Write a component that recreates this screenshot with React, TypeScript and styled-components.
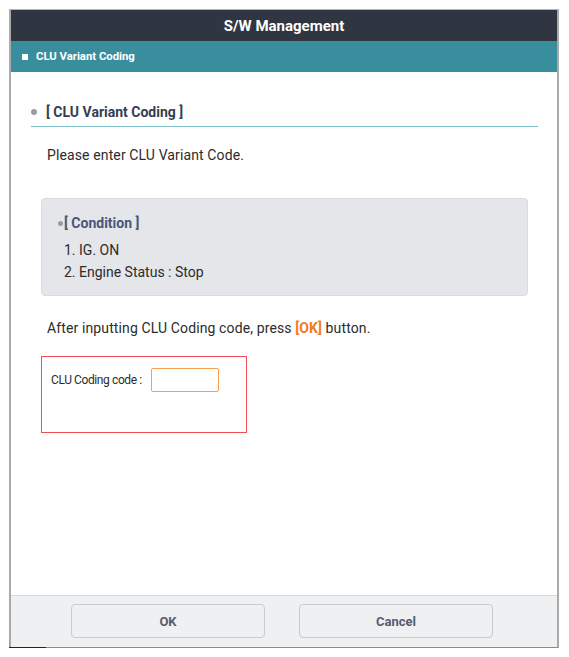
import styled, { createGlobalStyle } from "styled-components";

const GlobalStyle = createGlobalStyle`
  * {
    box-sizing: border-box;
  }

  body {
    margin: 0;
    background: #ffffff;
    font-family: Roboto, "Liberation Sans", Arial, sans-serif;
  }
`;

const conditions = ["1. IG. ON", "2. Engine Status : Stop"];

export default function App() {
  return (
    <Page>
      <GlobalStyle />
      <Frame>
        <TitleBar>S/W Management</TitleBar>
        <SubBar>
          <SubMark />
          CLU Variant Coding
        </SubBar>

        <Body>
          <SectionTitle>
            <Dot $size={6} />
            [ CLU Variant Coding ]
          </SectionTitle>

          <Paragraph $top={18}>Please enter CLU Variant Code.</Paragraph>

          <ConditionBox>
            <ConditionTitle>
              <Dot $size={5} />
              [ Condition ]
            </ConditionTitle>
            {conditions.map((line) => (
              <ConditionLine key={line}>{line}</ConditionLine>
            ))}
          </ConditionBox>

          <Paragraph $top={22}>
            After inputting CLU Coding code, press <Accent>[OK]</Accent> button.
          </Paragraph>

          <InputPanel>
            <InputRow>
              <InputLabel>CLU Coding code :</InputLabel>
              <CodeInput type="text" />
            </InputRow>
          </InputPanel>
        </Body>

        <Footer>
          <FooterButton>OK</FooterButton>
          <FooterButton>Cancel</FooterButton>
        </Footer>
      </Frame>
      <CornerMark />
    </Page>
  );
}

const Page = styled.div`
  padding: 9px 0 0 9px;
`;

const Frame = styled.div`
  width: 550px;
  height: 639px;
  display: flex;
  flex-direction: column;
  border: 1px solid #b4b4b4;
  border-left: 2px solid #aaaaaa;
  border-right: 2px solid #aaaaaa;
  border-bottom: 1px solid #8c8c8c;
  background: #ffffff;
`;

const TitleBar = styled.div`
  height: 31px;
  display: flex;
  align-items: center;
  justify-content: center;
  background: #2f3642;
  color: #ffffff;
  font-size: 15px;
  font-weight: 700;
`;

const SubBar = styled.div`
  height: 31px;
  display: flex;
  align-items: center;
  gap: 8px;
  padding-left: 11px;
  background: #398e9e;
  color: #ffffff;
  font-size: 11.3px;
  font-weight: 700;
`;

const SubMark = styled.span`
  width: 6px;
  height: 6px;
  background: #ffffff;
`;

const Body = styled.div`
  flex: 1;
  display: flex;
  flex-direction: column;
  align-items: flex-start;
  padding: 0 19px 0 20px;
`;

const Dot = styled.span<{ $size: number }>`
  width: ${(p) => p.$size}px;
  height: ${(p) => p.$size}px;
  border-radius: 50%;
  background: #9a9ca2;
  flex: none;
`;

const SectionTitle = styled.div`
  align-self: stretch;
  display: flex;
  align-items: center;
  gap: 9px;
  margin-top: 30px;
  padding-bottom: 4px;
  border-bottom: 1px solid #7cc0ca;
  color: #363d52;
  font-size: 14px;
  font-weight: 700;
  line-height: 20px;
`;

const Paragraph = styled.p<{ $top: number }>`
  margin: ${(p) => p.$top}px 0 0;
  padding-left: 16px;
  color: #2c2c2c;
  font-size: 14px;
  line-height: 20px;
  letter-spacing: 0.12px;
`;

const Accent = styled.span`
  color: #f47b20;
  font-weight: 700;
`;

const ConditionBox = styled.div`
  align-self: stretch;
  height: 98px;
  margin: 33px 10px 0;
  padding: 15px 16px 0;
  background: #e4e6ea;
  border: 1px solid #d9dbdf;
  border-radius: 4px;
`;

const ConditionTitle = styled.div`
  display: flex;
  align-items: center;
  gap: 1px;
  margin: -1px 0 6px;
  color: #4a5677;
  font-size: 14px;
  font-weight: 700;
  line-height: 20px;
`;

const ConditionLine = styled.div`
  padding-left: 6px;
  color: #2c2c2c;
  font-size: 14px;
  line-height: 22px;
`;

const InputPanel = styled.div`
  width: 206px;
  height: 77px;
  margin: 18px 0 0 10px;
  border: 1px solid #ef4f55;
`;

const InputRow = styled.div`
  display: flex;
  align-items: center;
  gap: 9px;
  padding: 11px 0 0 9px;
`;

const InputLabel = styled.span`
  width: 91px;
  color: #2c2c2c;
  font-size: 12px;
  letter-spacing: -0.4px;
  white-space: nowrap;
`;

const CodeInput = styled.input`
  width: 68px;
  height: 24px;
  padding: 0 4px;
  border: 1px solid #f4a04e;
  border-radius: 2px;
  background: #ffffff;
  outline: none;
`;

const Footer = styled.div`
  display: flex;
  gap: 34px;
  padding: 8px 0 9px 60px;
  border-top: 1px solid #d6d7da;
  background: #eff0f2;
`;

const FooterButton = styled.button`
  width: 194px;
  height: 34px;
  border: 1px solid #c9cbd0;
  border-radius: 4px;
  background: #eff0f2;
  color: #565d6d;
  font-family: Roboto, "Liberation Sans", Arial, sans-serif;
  font-size: 13px;
  font-weight: 700;
  cursor: pointer;
`;

const CornerMark = styled.div`
  width: 37px;
  height: 1px;
  margin-top: -1px;
  background: #1c1f5a;
`;
